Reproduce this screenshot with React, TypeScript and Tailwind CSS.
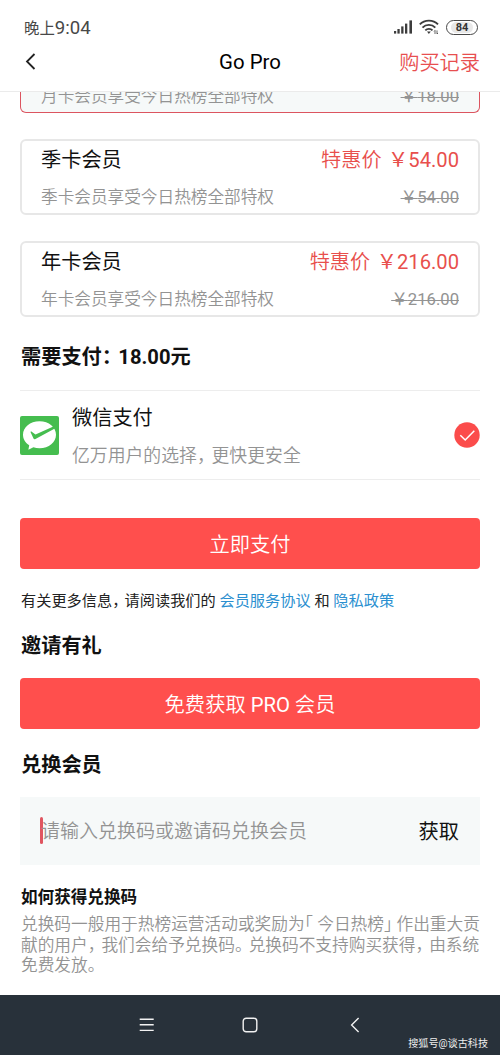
import type { ReactNode } from "react";

/** Half-width punctuation followed by a little air. */
function Punct({ children, wide = false }: { children: ReactNode; wide?: boolean }) {
  return (
    <span
      className={
        wide
          ? "mr-[0.32em] [font-feature-settings:'halt']"
          : "mr-[0.25em] [font-feature-settings:'halt']"
      }
    >
      {children}
    </span>
  );
}

function StatusBar() {
  return (
    <div className="flex h-[54px] items-center justify-between pl-6 pr-[22px] text-[#484848]">
      <div className="flex items-baseline pt-[3px] leading-[54px]">
        <span className="text-[15.4px]">晚上</span>
        <span className="text-[18.6px]">9:04</span>
      </div>
      <div className="flex items-center">
        <svg className="h-[14px] w-5" viewBox="0 0 20 14" fill="#3d3d3d">
          <rect x="0" y="11" width="2.2" height="2.6" />
          <rect x="3.4" y="9" width="2.3" height="4.6" />
          <rect x="7.2" y="6.4" width="2.3" height="7.2" />
          <rect x="11" y="3.6" width="2.3" height="10" />
          <rect x="15.4" y="0.4" width="2.6" height="13.2" />
        </svg>
        <svg className="ml-[5px] mr-px h-[16px] w-5" viewBox="0 0 20 16" fill="none" stroke="#3d3d3d" strokeWidth="1.9">
          <path d="M0.8 5.4 C5.6 0.3 14.2 0.3 19 5.4" />
          <path d="M3.5 8.6 C7 4.9 12.8 4.9 16.3 8.6" />
          <path d="M6.3 11.4 C8.3 9.3 11.5 9.3 13.5 11.4" />
          <path d="M8 12.6 h3.8 l-1.9 2.3z" fill="#3d3d3d" stroke="none" />
          <path d="M16 15 v-3.6 M15 12.4 l1 -1 M18 11.4 v3.6 l1 -1" strokeWidth="0.8" />
        </svg>
        <div className="ml-[6px] flex h-[15px] w-8 items-center justify-center rounded-full border-[1.5px] border-[#484848] bg-white">
          <span className="rounded-full bg-[#e8e8e8] px-[5px] text-[11px] font-bold leading-[11px] text-[#333]">84</span>
        </div>
      </div>
    </div>
  );
}

function Header() {
  return (
    <div className="grid h-[38px] grid-cols-3 items-start border-b border-[#ebebeb] px-5 text-[20.2px] leading-[16px]">
      <svg className="-mt-px ml-[5px] h-[17px] w-[11px]" viewBox="0 0 11 17" fill="none" stroke="#222" strokeWidth="1.8">
        <path d="M9.5 1 L2 8.5 L9.5 16" />
      </svg>
      <div className="text-center text-[20.4px] text-black">Go Pro</div>
      <div className="pt-px text-right font-[350] text-[#e84f50]">购买记录</div>
    </div>
  );
}

type Plan = { name: string; price: string };

const plans: Plan[] = [
  { name: "季卡会员", price: "54.00" },
  { name: "年卡会员", price: "216.00" },
];

function PlanDetails({ name, price }: Plan) {
  return (
    <div className="flex justify-between text-[16.65px] leading-[35px] text-[#939393]">
      <span className="font-[350]">{name}享受今日热榜全部特权</span>
      <span className="line-through decoration-1">￥{price}</span>
    </div>
  );
}

/** Selected plan, partly scrolled under the header. */
function SelectedPlan() {
  return (
    <div className="h-[21px] overflow-hidden rounded-b-[6px] border-[1.5px] border-t-0 border-[#dc5560] bg-[#f6f9f9] px-5">
      <div className="-mt-[13px]">
        <PlanDetails name="月卡会员" price="18.00" />
      </div>
    </div>
  );
}

function PlanCard({ name, price }: Plan) {
  return (
    <div className="flex h-[76px] flex-col rounded-[6px] border-2 border-[#e7e7e7] bg-white px-[19px]">
      <div className="flex h-[39px] justify-between text-[20.2px] leading-[39px]">
        <span className="text-[#111]">{name}</span>
        <span className="text-[#e84f4c] [word-spacing:1.5px]">
          <span className="font-[350]">特惠价</span> ￥{price}
        </span>
      </div>
      <PlanDetails name={name} price={price} />
    </div>
  );
}

function PaymentMethod() {
  return (
    <div className="flex h-[90px] items-center border-y border-[#ededed]">
      <svg className="h-[39px] w-[39px]" viewBox="0 0 39 39">
        <rect width="39" height="39" rx="2" fill="#45bd4f" />
        <path
          d="M19.5 5.2 C10 5.2 3 11.3 3 18.8 C3 23.2 5.4 26.9 9.2 29.3 L8.4 33.7 L13.4 31.3 C15.3 32 17.4 32.3 19.5 32.3 C29 32.3 36 26.3 36 18.8 C36 11.3 29 5.2 19.5 5.2Z"
          fill="#fff"
        />
        <path d="M11 15.2 L15.5 18.5 L35 9.7 L35.8 11.9 L15 23.2 C14.4 23.5 13.8 23.2 13.5 22.6 L10.5 16 Z" fill="#45bd4f" />
      </svg>
      <div className="ml-[13px] flex flex-1 flex-col pt-[3px]">
        <span className="text-[20.2px] leading-[38px] text-[#111]">微信支付</span>
        <span className="text-[17.85px] font-[350] leading-[38px] text-[#939393]">
          亿万用户的选择<Punct wide>，</Punct>更快更安全
        </span>
      </div>
      <svg className="h-[26px] w-[26px]" viewBox="0 0 26 26" fill="none">
        <circle cx="13" cy="13" r="12.7" fill="#fb4c4b" />
        <path d="M6.3 13.2 L11.2 18 L20.3 8.7" stroke="#fff" strokeWidth="1.5" />
      </svg>
    </div>
  );
}

function PrimaryButton({ children }: { children: ReactNode }) {
  return (
    <button className="block h-[51px] w-full overflow-hidden rounded-[4px] bg-[#ff4f4d] pt-px text-center text-[20.3px] font-[350] leading-[53px] text-white">
      {children}
    </button>
  );
}

function NavBar() {
  return (
    <div className="relative h-[60px] bg-[#28313a]">
      <div className="flex h-full items-center justify-between pl-[139px] pr-[138px]">
        <svg className="h-4 w-4" viewBox="0 0 16 16" stroke="#f2f2f2" strokeWidth="1.4">
          <path d="M0.7 2.2 H14.7 M0.7 7.8 H14.7 M0.7 13.4 H14.7" />
        </svg>
        <svg className="-ml-[2px] h-4 w-4" viewBox="0 0 16 16" fill="none" stroke="#f2f2f2" strokeWidth="1.4">
          <rect x="1.2" y="1.2" width="13.6" height="13.6" rx="3" />
        </svg>
        <svg className="h-4 w-4" viewBox="0 0 16 16" fill="none" stroke="#f2f2f2" strokeWidth="1.4">
          <path d="M12.6 1 L5.6 8 L12.6 15" />
        </svg>
      </div>
      <span className="absolute right-3 top-[43px] whitespace-nowrap text-[10.1px] leading-[12px] text-[#eee]">
        搜狐号@谈古科技
      </span>
    </div>
  );
}

export default function App() {
  return (
    <div className="flex h-[1055px] w-[500px] flex-col overflow-hidden bg-white font-['Roboto','Noto_Sans_CJK_SC',sans-serif]">
      <StatusBar />
      <Header />
      <main className="flex-1 px-5">
        <div className="flex flex-col gap-[26px]">
          <SelectedPlan />
          {plans.map((plan) => (
            <PlanCard key={plan.name} {...plan} />
          ))}
        </div>
        <h2 className="h-[73px] pl-px text-[20.2px] font-bold leading-[81px] text-[#111]">
          需要支付<Punct wide>：</Punct>18.00元
        </h2>
        <PaymentMethod />
        <div className="pt-[38px]">
          <PrimaryButton>立即支付</PrimaryButton>
        </div>
        <p className="h-[54px] whitespace-nowrap pl-px pt-[5px] text-[15.2px] leading-[54px] text-[#222]">
          有关更多信息<Punct wide>，</Punct>请阅读我们的 <a className="text-[#2b8fd0]">会员服务协议</a> 和{" "}
          <a className="text-[#2b8fd0]">隐私政策</a>
        </p>
        <h2 className="h-[55px] pl-px pt-px text-[20.2px] font-bold leading-[45px] text-[#111]">邀请有礼</h2>
        <PrimaryButton>
          免费获取 <span className="font-normal">PRO</span> 会员
        </PrimaryButton>
        <h2 className="h-[68px] pl-px pt-px text-[20.2px] font-bold leading-[71px] text-[#111]">兑换会员</h2>
        <div className="flex h-[68px] items-center bg-[#f6f9f9] px-5 pt-[2px] leading-[66px]">
          <span className="-mt-[4px] h-[27px] w-[3px] rounded-full bg-[#e05560]" />
          <span className="-ml-[2px] flex-1 text-[19px] font-[350] text-[#939393]">请输入兑换码或邀请码兑换会员</span>
          <span className="pr-px text-[20.2px] text-[#111]">获取</span>
        </div>
        <h3 className="h-[50px] pl-px text-[16.6px] font-bold leading-[66px] text-[#111]">如何获得兑换码</h3>
        <div className="whitespace-nowrap pl-px text-[16.7px] font-[350] leading-[20.6px] text-[#939393]">
          <p>
            兑换码一般用于热榜运营活动或奖励为
            <Punct>「</Punct>今日热榜<Punct>」</Punct>作出重大贡
          </p>
          <p>
            献的用户<Punct wide>，</Punct>我们会给予兑换码<Punct wide>。</Punct>兑换码不支持购买获得
            <Punct wide>，</Punct>由系统
          </p>
          <p>免费发放。</p>
        </div>
      </main>
      <NavBar />
    </div>
  );
}
